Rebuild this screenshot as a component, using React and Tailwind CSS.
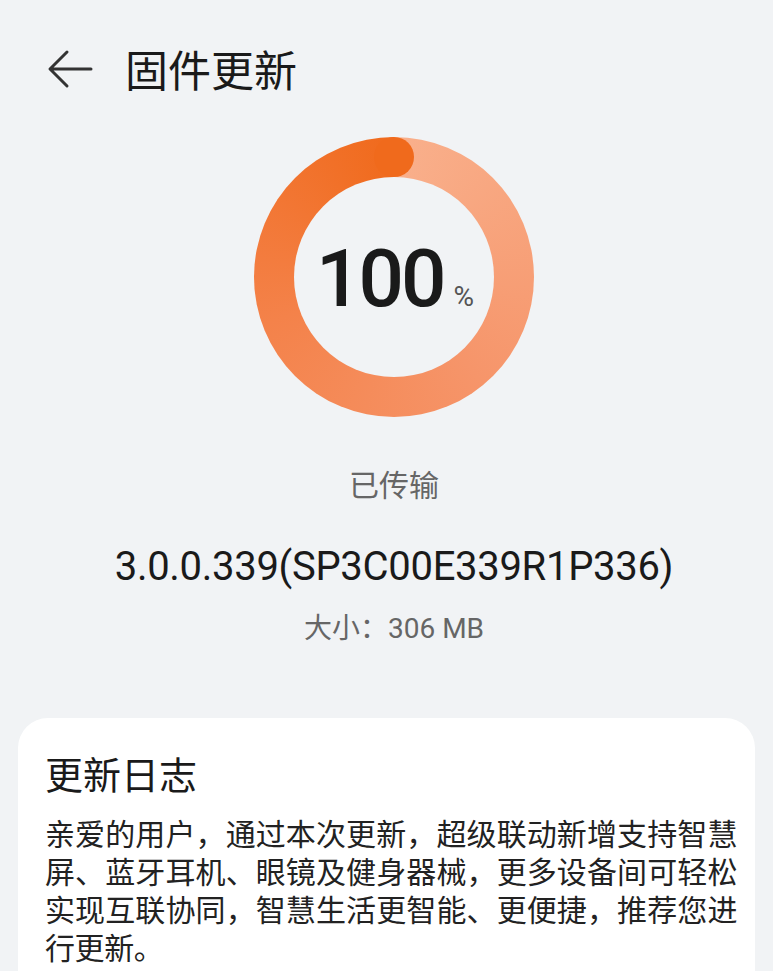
import React from 'react';

const cjk = { fontFamily: '"Noto Sans CJK SC", sans-serif' };
const latin = { fontFamily: 'Roboto, "Noto Sans CJK SC", sans-serif' };

function BackArrow() {
  return (
    <svg width="46" height="40" viewBox="0 0 46 40" fill="none">
      <path
        d="M44 20H4M20 3L3 20L20 37"
        stroke="#333"
        strokeWidth="3"
        strokeLinecap="round"
        strokeLinejoin="round"
      />
    </svg>
  );
}

function ProgressRing({ value = 100 }) {
  return (
    <div className="relative h-[280px] w-[280px] rounded-full bg-[conic-gradient(#f9b08c_0deg,#f6956a_140deg,#f4824a_250deg,#f06a1c_360deg)]">
      {/* round cap at the end of the arc */}
      <div className="absolute left-[120px] top-0 h-[40px] w-[40px] rounded-full bg-[#f06a1c]" />
      <div className="absolute left-[40px] top-[40px] flex h-[200px] w-[200px] items-center justify-center rounded-full bg-[#f1f3f5]">
        <div className="flex items-baseline pl-[2px] pt-[4px]" style={latin}>
          <span className="text-[80px] font-medium leading-none tracking-[-3px] text-[#1a1a1a]">
            {value}
          </span>
          <span className="ml-[10px] text-[28px] leading-none text-[#555]">%</span>
        </div>
      </div>
    </div>
  );
}

export default function App() {
  const lines = [
    '亲爱的用户，通过本次更新，超级联动新增支持智慧',
    '屏、蓝牙耳机、眼镜及健身器械，更多设备间可轻松',
    '实现互联协同，智慧生活更智能、更便捷，推荐您进',
  ];

  return (
    <div className="h-[971px] w-full overflow-hidden bg-[#f1f3f5]">
      {/* header */}
      <div className="flex items-center pl-[47px] pt-[47px]">
        <BackArrow />
        <h1 className="ml-[32px] text-[43px] leading-[43px] text-[#1a1a1a]" style={cjk}>
          固件更新
        </h1>
      </div>

      {/* progress */}
      <div className="flex flex-col items-center pl-[15px]">
        <div className="mt-[47px]">
          <ProgressRing value={100} />
        </div>
        <div className="mt-[48px] text-[30px] leading-[36px] text-[#666]" style={cjk}>
          已传输
        </div>
        <div className="mt-[44px] text-[40px] leading-[44px] tracking-[-0.3px] text-[#1a1a1a]" style={latin}>
          3.0.0.339(SP3C00E339R1P336)
        </div>
        <div className="mt-[20px] text-[28px] leading-[34px] text-[#666]" style={cjk}>
          大小：<span style={latin}>306 MB</span>
        </div>
      </div>

      {/* changelog */}
      <div className="mx-[18px] mt-[72px] rounded-[30px] bg-white pb-8 pl-[27px] pr-[18px] pt-[34px]">
        <h2 className="text-[38px] leading-[42px] text-[#1a1a1a]" style={cjk}>
          更新日志
        </h2>
        <div className="mt-[19px] whitespace-nowrap text-[30px] leading-[38px] tracking-[-0.4px] text-[#222]" style={cjk}>
          {lines.map((line) => (
            <div key={line} className="text-justify [text-align-last:justify]">
              {line}
            </div>
          ))}
          <div>行更新。</div>
          <div>【新增】</div>
        </div>
      </div>
    </div>
  );
}
